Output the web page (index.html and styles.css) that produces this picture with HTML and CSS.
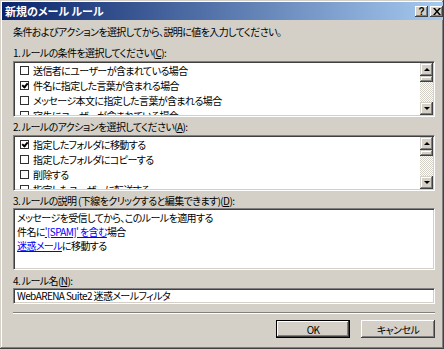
FILE: index.html
```html
<!DOCTYPE html>
<html lang="ja">
<head>
  <meta charset="UTF-8" />
  <title>新規のメール ルール</title>
  <link rel="stylesheet" href="styles.css">
</head>
<body>
  <div class="window">
    <div class="titlebar">
      <span class="title">新規のメール ルール</span>
      <div class="caption-buttons">
        <span class="cap-btn">?</span>
        <span class="cap-btn">
          <svg width="8" height="7" viewBox="0 0 8 7"><path d="M0 0h2l2 2.5L6 0h2L5 3.5 8 7H6L4 4.5 2 7H0l3-3.5z" fill="#000"/></svg>
        </span>
      </div>
    </div>

    <div class="content">
      <p class="intro">条件およびアクションを選択してから、説明に値を入力してください。</p>

      <div class="label">1. ルールの条件を選択してください(<u>C</u>):</div>
      <div class="listbox">
        <ul class="items">
          <li><span class="check"></span>送信者にユーザーが含まれている場合</li>
          <li><span class="check checked"></span>件名に指定した言葉が含まれる場合</li>
          <li><span class="check"></span>メッセージ本文に指定した言葉が含まれる場合</li>
          <li><span class="check"></span>宛先にユーザーが含まれている場合</li>
        </ul>
        <div class="scrollbar">
          <div class="sb-btn"><span class="arrow up"></span></div>
          <div class="sb-thumb"></div>
          <div class="sb-track"></div>
          <div class="sb-btn"><span class="arrow down"></span></div>
        </div>
      </div>

      <div class="label">2. ルールのアクションを選択してください(<u>A</u>):</div>
      <div class="listbox">
        <ul class="items">
          <li><span class="check checked"></span>指定したフォルダに移動する</li>
          <li><span class="check"></span>指定したフォルダにコピーする</li>
          <li><span class="check"></span>削除する</li>
          <li><span class="check"></span>指定したユーザーに転送する</li>
        </ul>
        <div class="scrollbar">
          <div class="sb-btn"><span class="arrow up"></span></div>
          <div class="sb-thumb"></div>
          <div class="sb-track"></div>
          <div class="sb-btn"><span class="arrow down"></span></div>
        </div>
      </div>

      <div class="label label-desc">3. ルールの説明 (下線をクリックすると編集できます)(<u>D</u>):</div>
      <div class="description">
        <div>メッセージを受信してから、このルールを適用する</div>
        <div>件名に<a href="#">'[SPAM]' を含む</a>場合</div>
        <div><a href="#">迷惑メール</a>に移動する</div>
      </div>

      <div class="label label-name">4. ルール名(<u>N</u>):</div>
      <div class="textbox">WebARENA Suite2 迷惑メールフィルタ</div>

      <div class="separator"></div>

      <div class="buttons">
        <button class="btn default">OK</button>
        <button class="btn">キャンセル</button>
      </div>
    </div>
  </div>
</body>
</html>
```

FILE: styles.css
```css
* {
  box-sizing: border-box;
}

body {
  margin: 0;
  font-family: "Noto Sans CJK JP", "Liberation Sans", sans-serif;
  font-size: 10px;
  letter-spacing: -0.6px;
  font-feature-settings: "palt";
  color: #000000;
  background-color: #d4d0c8;
}

.window {
  width: 444px;
  height: 349px;
  padding: 2px 1px 2px 2px;
  background-color: #d4d0c8;
  box-shadow: inset -1px -1px #404040, inset 1px 1px #d4d0c8,
              inset -2px -2px #808080, inset 2px 2px #ffffff;
}

.titlebar {
  height: 18px;
  display: flex;
  align-items: center;
  justify-content: space-between;
  padding: 0 0 0 3px;
  background: linear-gradient(to right, #0a246a, #a6caf0);
}

.title {
  color: #ffffff;
  font-weight: bold;
  font-size: 11px;
  letter-spacing: 0;
}

.caption-buttons {
  display: flex;
  gap: 2px;
}

.cap-btn {
  width: 13px;
  height: 11px;
  display: flex;
  align-items: center;
  justify-content: center;
  font-family: "Liberation Sans", sans-serif;
  font-weight: bold;
  font-size: 10px;
  letter-spacing: 0;
  background-color: #d4d0c8;
  box-shadow: inset -1px -1px #404040, inset 1px 1px #ffffff,
              inset -2px -2px #808080;
}

.content {
  padding: 0 8px 0 11px;
}

.intro {
  margin: 5px 0 0;
  line-height: 14px;
}

.label {
  line-height: 14px;
  margin: 7px 0 1px;
}

.listbox + .label {
  margin-top: 3px;
}

.label-desc {
  margin-bottom: 0;
}

.label.label-name {
  margin-top: 4px;
  margin-bottom: 0;
}

.listbox,
.description,
.textbox {
  background-color: #ffffff;
  border: 1px solid;
  border-color: #808080 #ffffff #ffffff #808080;
  box-shadow: inset 1px 1px #404040, inset -1px -1px #d4d0c8;
}

.listbox {
  height: 56px;
  display: flex;
  padding: 1px;
  overflow: hidden;
}

.items {
  flex: 1;
  list-style: none;
  margin: 0;
  padding: 0;
  overflow: hidden;
}

.items li {
  height: 15px;
  display: flex;
  align-items: center;
  gap: 4px;
  padding-left: 5px;
  white-space: nowrap;
}

.check {
  width: 9px;
  height: 9px;
  border: 1px solid #303030;
  background-color: #ffffff;
  position: relative;
}

.check.checked::after {
  content: "";
  position: absolute;
  left: 1px;
  top: 0;
  width: 2px;
  height: 4px;
  border: solid #000000;
  border-width: 0 2px 2px 0;
  transform: translate(1px, 0) rotate(40deg);
}

.scrollbar {
  width: 13px;
  display: flex;
  flex-direction: column;
}

.sb-btn,
.sb-thumb {
  background-color: #d4d0c8;
  box-shadow: inset -1px -1px #404040, inset 1px 1px #d4d0c8,
              inset -2px -2px #808080, inset 2px 2px #ffffff;
}

.sb-btn {
  height: 13px;
  display: flex;
  align-items: center;
  justify-content: center;
}

.sb-thumb {
  height: 6px;
}

.sb-track {
  flex: 1;
  background: repeating-conic-gradient(#ffffff 0 25%, #d4d0c8 0 50%) 0 0 / 2px 2px;
}

.arrow {
  width: 0;
  height: 0;
  border-left: 3px solid transparent;
  border-right: 3px solid transparent;
}

.arrow.up {
  border-bottom: 3px solid #000000;
}

.arrow.down {
  border-top: 3px solid #000000;
}

.description {
  height: 62px;
  padding: 2px 3px;
  line-height: 14px;
}

.description a {
  color: #0000ff;
  text-decoration: underline;
}

.textbox {
  height: 16px;
  padding: 0 3px;
  line-height: 14px;
  white-space: nowrap;
}

.separator {
  margin-top: 8px;
  height: 2px;
  border-top: 1px solid #808080;
  border-bottom: 1px solid #ffffff;
}

.buttons {
  margin-top: 6px;
  display: flex;
  justify-content: flex-end;
  gap: 11px;
}

.btn {
  width: 74px;
  height: 18px;
  padding: 0;
  border: none;
  font-family: inherit;
  font-size: 10px;
  letter-spacing: inherit;
  font-feature-settings: "palt";
  color: #000000;
  background-color: #d4d0c8;
  box-shadow: inset -1px -1px #404040, inset 1px 1px #ffffff,
              inset -2px -2px #808080, inset 2px 2px #d4d0c8;
}

.btn.default {
  border: 1px solid #000000;
  box-shadow: inset -1px -1px #404040, inset 1px 1px #ffffff,
              inset -2px -2px #808080;
}
```
